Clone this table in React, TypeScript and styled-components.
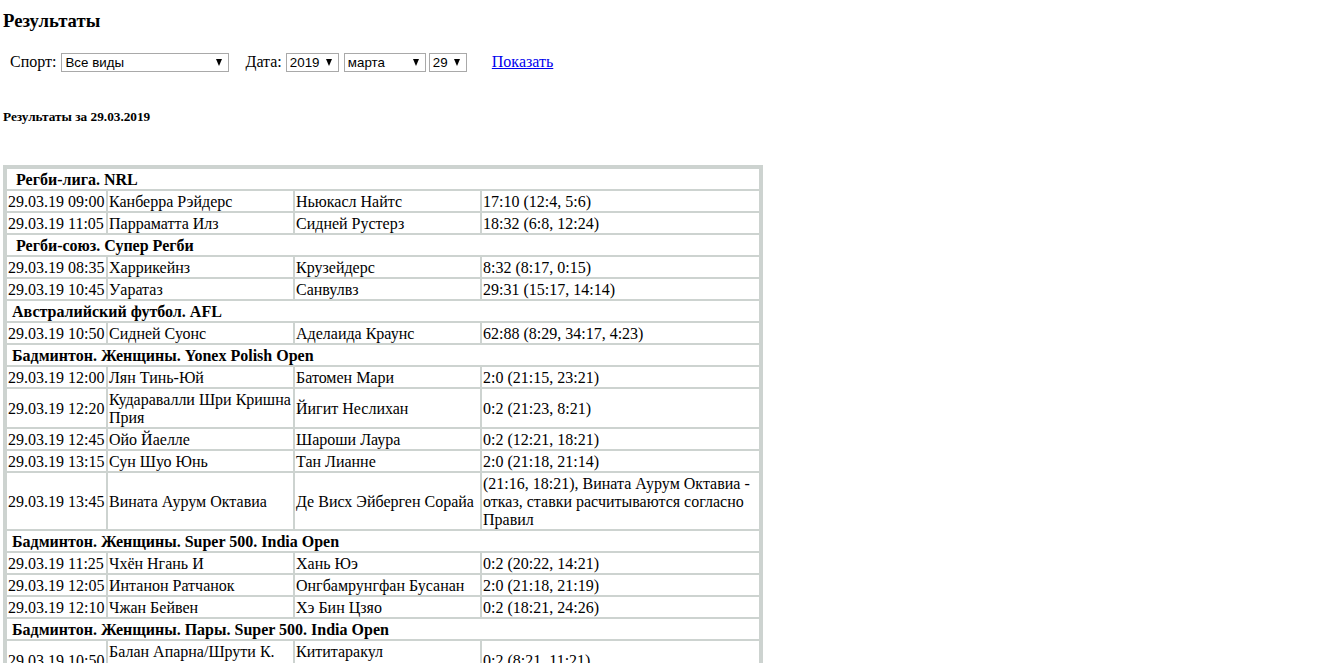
import React from "react";
import styled, { createGlobalStyle } from "styled-components";

const Global = createGlobalStyle`
  html, body { margin: 0; padding: 0; background: #fff; }
  body { font-family: "Liberation Serif", "Times New Roman", serif; color: #000; padding: 0 3px; }
`;

const Title = styled.h3`
  margin: 11px 0 0;
  font-size: 18.72px;
  line-height: 20px;
  font-weight: bold;
`;

const FilterRow = styled.form`
  display: flex;
  align-items: center;
  height: 20px;
  margin: 21px 0 0 7px;
  font-size: 16px;
`;

const Label = styled.span<{ $gap: number; $before?: number }>`
  margin-right: ${(p) => p.$gap}px;
  margin-left: ${(p) => p.$before ?? 0}px;
  line-height: 18px;
`;

const SelectWrap = styled.span<{ $w: number; $mr?: number }>`
  position: relative;
  display: inline-block;
  width: ${(p) => p.$w}px;
  height: 19px;
  margin-right: ${(p) => p.$mr ?? 0}px;
`;

const Select = styled.select`
  appearance: none;
  -webkit-appearance: none;
  box-sizing: border-box;
  width: 100%;
  height: 19px;
  border: 1px solid #a9a9a9;
  border-radius: 0;
  background: #fff;
  font-family: "Liberation Sans", Arial, sans-serif;
  font-size: 13.33px;
  color: #000;
  padding: 0 0 0 3px;
  margin: 0;
  outline: none;
`;

const Arrow = styled.span`
  position: absolute;
  right: 7px;
  top: 6px;
  width: 0;
  height: 0;
  border-left: 3.5px solid transparent;
  border-right: 3.5px solid transparent;
  border-top: 7px solid #000;
  pointer-events: none;
`;

const ShowLink = styled.a`
  margin-left: 25px;
  color: #0000ee;
  text-decoration: underline;
  font-size: 16px;
  line-height: 18px;
  cursor: pointer;
`;

const SubTitle = styled.h5`
  margin: 38px 0 0;
  font-size: 13.28px;
  line-height: 14px;
  font-weight: bold;
`;

const Table = styled.table`
  margin-top: 41px;
  width: 760px;
  border: 2px solid #cdd3d0;
  border-spacing: 2px;
  background: #cdd3d0;
  table-layout: fixed;
  font-size: 16px;
`;

const Cell = styled.td`
  background: #fff;
  padding: 2px 1px 0;
  line-height: 18px;
  vertical-align: middle;
  white-space: normal;
`;

const HeadCell = styled.td<{ $indent: number }>`
  background: #fff;
  padding: 2px 1px 0 ${(p) => p.$indent}px;
  line-height: 18px;
  font-weight: bold;
`;

type Row =
  | { h: string; i: number }
  | { t: string; a: string; b: string; s: string };

const rows: Row[] = [
  { h: "Регби-лига. NRL", i: 9 },
  { t: "29.03.19 09:00", a: "Канберра Рэйдерс", b: "Ньюкасл Найтс", s: "17:10 (12:4, 5:6)" },
  { t: "29.03.19 11:05", a: "Парраматта Илз", b: "Сидней Рустерз", s: "18:32 (6:8, 12:24)" },
  { h: "Регби-союз. Супер Регби", i: 9 },
  { t: "29.03.19 08:35", a: "Харрикейнз", b: "Крузейдерс", s: "8:32 (8:17, 0:15)" },
  { t: "29.03.19 10:45", a: "Уаратаз", b: "Санвулвз", s: "29:31 (15:17, 14:14)" },
  { h: "Австралийский футбол. AFL", i: 5 },
  { t: "29.03.19 10:50", a: "Сидней Суонс", b: "Аделаида Краунс", s: "62:88 (8:29, 34:17, 4:23)" },
  { h: "Бадминтон. Женщины. Yonex Polish Open", i: 5 },
  { t: "29.03.19 12:00", a: "Лян Тинь-Юй", b: "Батомен Мари", s: "2:0 (21:15, 23:21)" },
  { t: "29.03.19 12:20", a: "Кударавалли Шри Кришна Прия", b: "Йигит Неслихан", s: "0:2 (21:23, 8:21)" },
  { t: "29.03.19 12:45", a: "Ойо Йаелле", b: "Шароши Лаура", s: "0:2 (12:21, 18:21)" },
  { t: "29.03.19 13:15", a: "Сун Шуо Юнь", b: "Тан Лианне", s: "2:0 (21:18, 21:14)" },
  {
    t: "29.03.19 13:45",
    a: "Вината Аурум Октавиа",
    b: "Де Висх Эйберген Сорайа",
    s: "(21:16, 18:21), Вината Аурум Октавиа - отказ, ставки расчитываются согласно Правил",
  },
  { h: "Бадминтон. Женщины. Super 500. India Open", i: 5 },
  { t: "29.03.19 11:25", a: "Чхён Нгань И", b: "Хань Юэ", s: "0:2 (20:22, 14:21)" },
  { t: "29.03.19 12:05", a: "Интанон Ратчанок", b: "Онгбамрунгфан Бусанан", s: "2:0 (21:18, 21:19)" },
  { t: "29.03.19 12:10", a: "Чжан Бейвен", b: "Хэ Бин Цзяо", s: "0:2 (18:21, 24:26)" },
  { h: "Бадминтон. Женщины. Пары. Super 500. India Open", i: 5 },
  {
    t: "29.03.19 10:50",
    a: "Балан Апарна/Шрути К. Прия",
    b: "Кититаракул Джонгколфан/\u2060Райинда",
    s: "0:2 (8:21, 11:21)",
  },
];

export default function App() {
  return (
    <>
      <Global />
      <Title>Результаты</Title>
      <FilterRow onSubmit={(e) => e.preventDefault()}>
        <Label $gap={5}>Спорт:</Label>
        <SelectWrap $w={168}>
          <Select defaultValue="all">
            <option value="all">Все виды</option>
          </Select>
          <Arrow />
        </SelectWrap>
        <Label $gap={4} $before={16}>Дата:</Label>
        <SelectWrap $w={53} $mr={5}>
          <Select defaultValue="2019">
            <option value="2019">2019</option>
          </Select>
          <Arrow />
        </SelectWrap>
        <SelectWrap $w={82} $mr={3}>
          <Select defaultValue="3">
            <option value="3">марта</option>
          </Select>
          <Arrow />
        </SelectWrap>
        <SelectWrap $w={38}>
          <Select defaultValue="29">
            <option value="29">29</option>
          </Select>
          <Arrow />
        </SelectWrap>
        <ShowLink href="#">Показать</ShowLink>
      </FilterRow>
      <SubTitle>Результаты за 29.03.2019</SubTitle>
      <Table>
        <colgroup>
          <col style={{ width: 99 }} />
          <col style={{ width: 185 }} />
          <col style={{ width: 185 }} />
          <col style={{ width: 277 }} />
        </colgroup>
        <tbody>
          {rows.map((r, idx) =>
            "h" in r ? (
              <tr key={idx}>
                <HeadCell colSpan={4} $indent={r.i}>
                  {r.h}
                </HeadCell>
              </tr>
            ) : (
              <tr key={idx}>
                <Cell>{r.t}</Cell>
                <Cell>{r.a}</Cell>
                <Cell>{r.b}</Cell>
                <Cell>{r.s}</Cell>
              </tr>
            )
          )}
        </tbody>
      </Table>
    </>
  );
}
